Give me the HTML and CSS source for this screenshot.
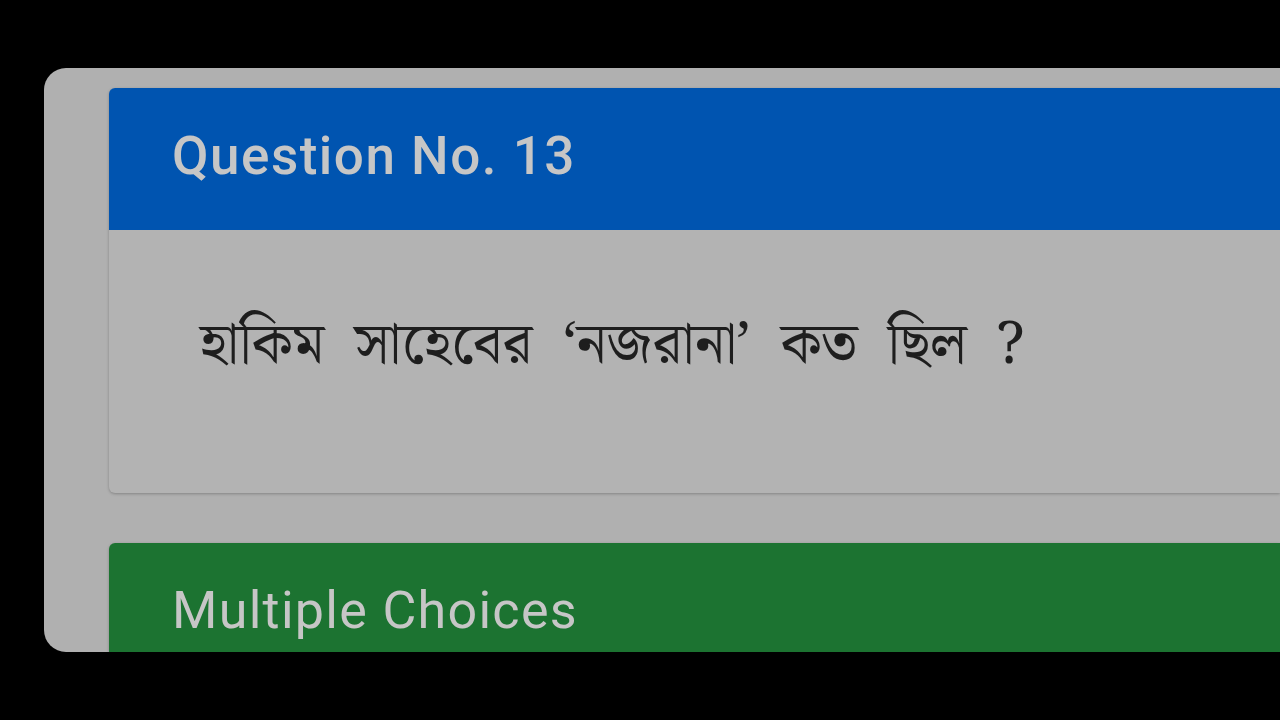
FILE: index.html
```html
<!DOCTYPE html>
<html lang="bn">
<head>
<meta charset="utf-8">
<title>Question No. 13</title>
<link rel="stylesheet" href="styles.css">
</head>
<body>
<div class="screen">
  <div class="panel">
    <section class="card">
      <header class="card-head head-blue">Question No. 13</header>
      <div class="card-body">
        <p class="question">হাকিম সাহেবের ‘নজরানা’ কত ছিল ?</p>
      </div>
    </section>
    <section class="card">
      <header class="card-head head-green">Multiple Choices</header>
    </section>
  </div>
</div>
</body>
</html>
```
FILE: styles.css
```css
html, body {
  margin: 0;
  padding: 0;
  background: #000;
  width: 1280px;
  height: 720px;
  overflow: hidden;
}
.screen {
  padding: 68px 0 0 44px;
  height: 720px;
  box-sizing: border-box;
}
.panel {
  height: 584px;
  background: #b0b0b0;
  border-radius: 22px 0 0 22px;
  overflow: hidden;
  padding: 20px 0 0 65px;
  box-sizing: border-box;
  display: flex;
  flex-direction: column;
  gap: 50px;
}
.card {
  background: #b3b3b3;
  border-radius: 6px 0 0 6px;
  box-shadow: 0 1px 3px rgba(0,0,0,0.25);
  overflow: hidden;
  flex-shrink: 0;
}
.card-head {
  height: 142px;
  box-sizing: border-box;
  padding: 0 0 6px 63px;
  display: flex;
  align-items: center;
  font-family: Roboto, "Noto Sans", sans-serif;
  color: #c6c6c6;
}
.head-blue {
  background: #0054b0;
  font-size: 53px;
  font-weight: 500;
  letter-spacing: 1.5px;
}
.head-green {
  background: #1c7331;
  font-size: 52px;
  letter-spacing: 1.3px;
  padding-bottom: 8px;
}
.card-body {
  height: 263px;
  box-sizing: border-box;
  padding: 82px 0 0 91px;
}
.question {
  margin: 0;
  font-family: "Noto Serif Bengali", "Noto Sans Bengali", "Lohit Bengali", "FreeSerif", "Noto Sans", sans-serif;
  font-size: 58px;
  font-weight: 400;
  color: #1e1e1e;
  line-height: 1.2;
  word-spacing: 15px;
}
```
